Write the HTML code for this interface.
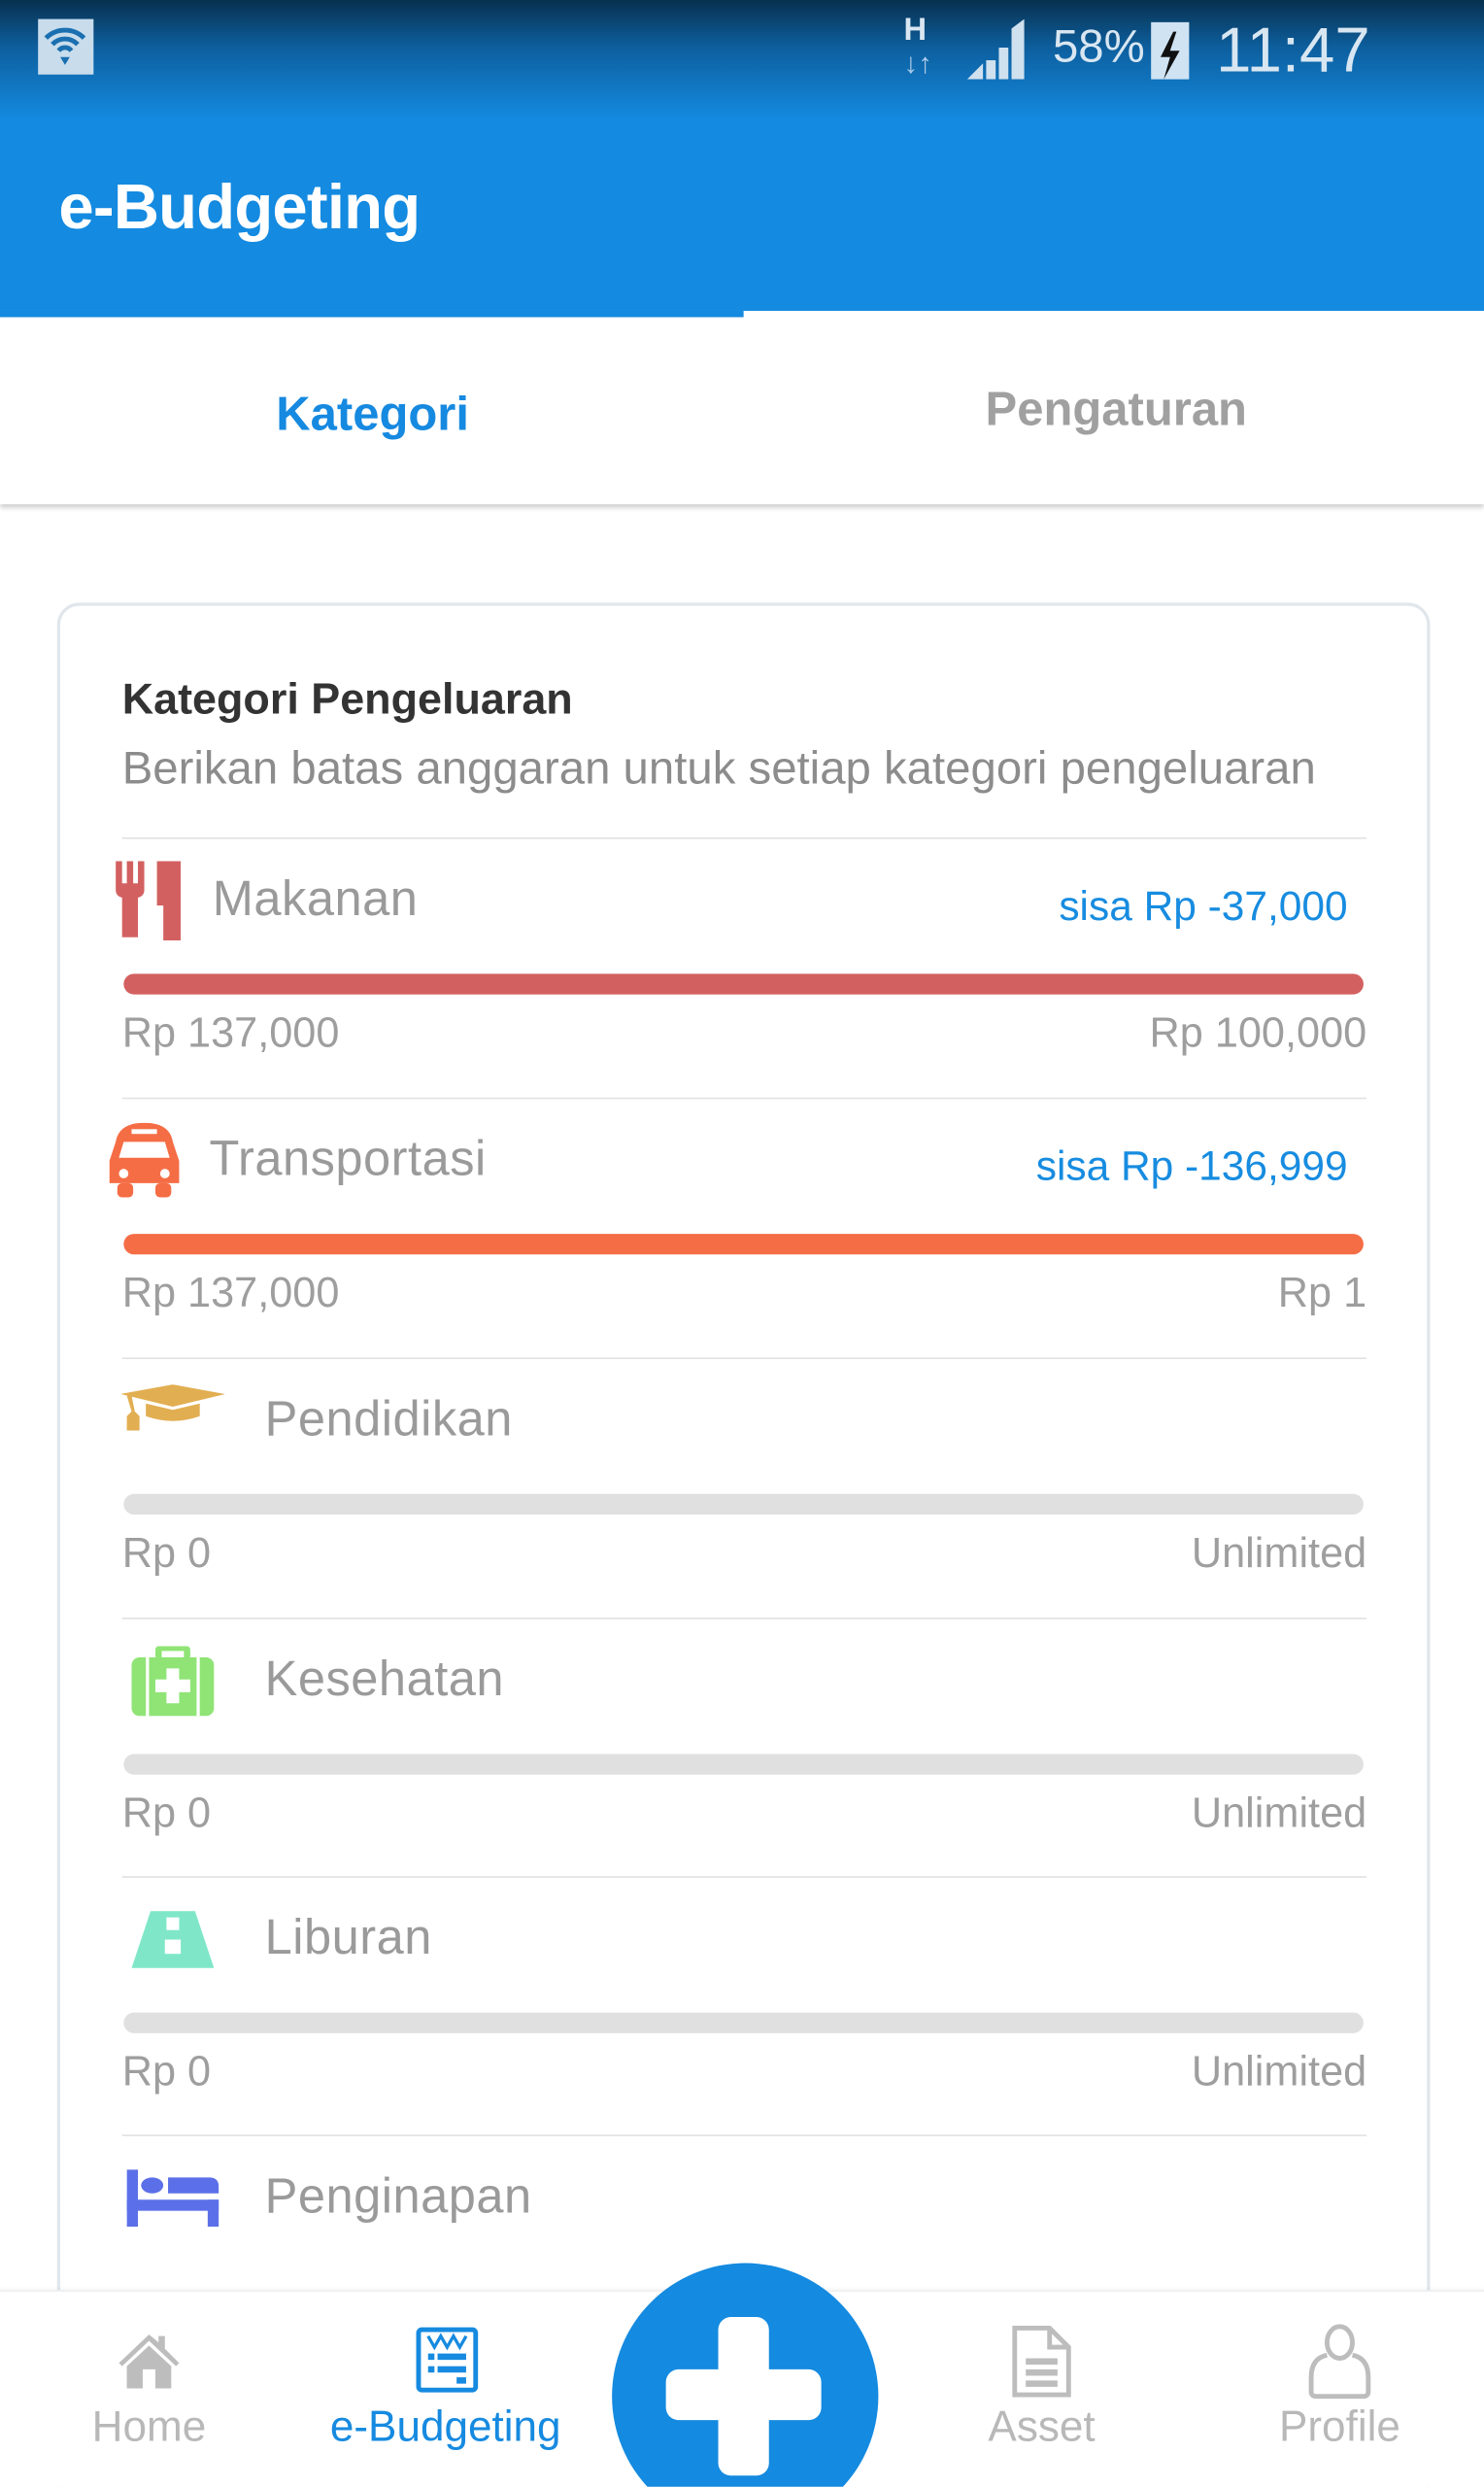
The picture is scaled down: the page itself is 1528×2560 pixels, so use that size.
<!DOCTYPE html>
<html><head><meta charset="utf-8"><style>
*{margin:0;padding:0;box-sizing:border-box}
html,body{width:1528px;height:2560px;overflow:hidden;background:#fff}
#w{position:absolute;left:0;top:0;width:936px;height:1568px;transform:scale(1.63248);transform-origin:0 0;font-family:"Liberation Sans",sans-serif;background:#fff;overflow:hidden}
.a{position:absolute;white-space:nowrap}
.row{position:absolute;left:0;width:936px;height:164px}
.name{position:absolute;font-size:31px;color:#9a9a9a;top:21px;letter-spacing:0.3px}
.sisa{position:absolute;right:86px;top:28px;font-size:26px;color:#178ce0}
.bar{position:absolute;left:78px;width:782px;top:86px;height:13px;border-radius:7px;background:#e0e0e0}
.l{position:absolute;left:77px;top:108px;font-size:26.5px;color:#9e9e9e}
.r{position:absolute;right:74px;top:108px;font-size:26.5px;color:#9e9e9e}
.div{position:absolute;left:77px;width:785px;top:0;height:1px;background:#e2e2e2}
.nl{position:absolute;top:1515px;font-size:27px;color:#b8b8b8;transform:translateX(-50%)}
</style></head><body><div id="w">
<div class="a" style="left:0;top:0;width:936px;height:196px;background:linear-gradient(#08304f 0px,#0d5f9e 30px,#148ae0 75px,#148ae0 196px)"></div>
<div class="a" style="left:0;top:196px;width:469px;height:4px;background:#148ae0"></div>
<div class="a" style="left:24px;top:12px;width:35px;height:35px;background:#c8dcec"></div>
<svg class="a" style="left:26px;top:16px" width="30" height="26" viewBox="0 0 30 26"><path d="M3 8a17 17 0 0 1 24 0M7 12a11 11 0 0 1 16 0M11 16a5 5 0 0 1 8 0" stroke="#1a6fb0" stroke-width="3" fill="none"/><path d="M12 20h6l-3 5z" fill="#1a6fb0"/></svg>
<div class="a" style="left:570px;top:8px;font-size:20px;font-weight:bold;color:#d8e6f2">H</div>
<div class="a" style="left:570px;top:30px;font-size:18px;font-weight:bold;color:#a8c8e8">↓↑</div>
<svg class="a" style="left:610px;top:12px" width="40" height="38"><path d="M0 38L10 28V38ZM12 26h6v12h-6zM20 18h6v20h-6zM28 6l8-6v38h-8z" fill="#cfe0ee"/></svg>
<div class="a" style="left:664px;top:14px;font-size:29px;color:#d8e6f2">58%</div>
<div class="a" style="left:726px;top:14px;width:24px;height:36px;background:#cfe3f3"></div>
<svg class="a" style="left:726px;top:18px" width="24" height="32"><path d="M14 2L6 18h6l-4 14 10-18h-6l4-12z" fill="#111"/></svg>
<div class="a" style="left:767px;top:10px;font-size:40px;color:#d8e6f2">11:47</div>
<div class="a" style="left:37px;top:109px;font-size:40px;font-weight:bold;color:#fff;letter-spacing:-0.5px">e-Budgeting</div>
<div class="a" style="left:0;top:200px;width:936px;height:118px;background:#fff;box-shadow:0 2px 3px rgba(0,0,0,.2)"></div>
<div class="a" style="left:235px;top:245px;transform:translateX(-50%);font-size:30px;font-weight:bold;color:#1689e0">Kategori</div>
<div class="a" style="left:704px;top:242px;transform:translateX(-50%);font-size:30px;font-weight:bold;color:#a0a0a0">Pengaturan</div>
<div class="a" style="left:36px;top:380px;width:866px;height:1200px;border:2px solid #e0e6ec;border-radius:14px;background:#fff"></div>
<div class="a" style="left:77px;top:425px;font-size:27.5px;font-weight:bold;color:#333">Kategori Pengeluaran</div>
<div class="a" style="left:77px;top:469px;font-size:29px;color:#8c8c8c">Berikan batas anggaran untuk setiap kategori pengeluaran</div>

<div class="row" style="top:528px"><div class="div"></div>
<svg class="a" style="left:72px;top:15px" width="42" height="50" viewBox="0 0 42 50"><path d="M1 0h4v14h3V0h4v14h3V0h4v18q0 4-4 5v25h-10V23q-4-1-4-5z" fill="#d36060"/><path d="M27 0h15v50h-11V28h-4z" fill="#d36060"/></svg>
<div class="name" style="left:134px">Makanan</div><div class="sisa">sisa Rp -37,000</div>
<div class="bar" style="background:#d36060"></div><div class="l">Rp 137,000</div><div class="r">Rp 100,000</div></div>

<div class="row" style="top:692px"><div class="div"></div>
<svg class="a" style="left:69px;top:16px" width="44" height="48" viewBox="0 0 44 48"><path d="M4 12Q6 0 22 0T40 12l4 12v14H0V24z" fill="#f56d45"/><rect x="14" y="4" width="16" height="3" fill="#fff"/><path d="M6 22l3-10h26l3 10z" fill="#fff"/><circle cx="9" cy="32" r="3" fill="#fff"/><circle cx="35" cy="32" r="3" fill="#fff"/><rect x="5" y="38" width="10" height="9" rx="3" fill="#f56d45"/><rect x="29" y="38" width="10" height="9" rx="3" fill="#f56d45"/></svg>
<div class="name" style="left:132px">Transportasi</div><div class="sisa">sisa Rp -136,999</div>
<div class="bar" style="background:#f56d45"></div><div class="l">Rp 137,000</div><div class="r">Rp 1</div></div>

<div class="row" style="top:856px"><div class="div"></div>
<svg class="a" style="left:76px;top:17px" width="66" height="44" viewBox="0 0 66 44"><path d="M0 6L33 0l33 6-33 8z" fill="#e2ae52"/><path d="M16 12v8q17 6 34 0v-8l-17 4z" fill="#e2ae52"/><path d="M4 7l3 10-3 3v9h8v-9l-3-3-2-10" fill="#e2ae52"/></svg>
<div class="name" style="left:167px">Pendidikan</div>
<div class="bar"></div><div class="l">Rp 0</div><div class="r">Unlimited</div></div>

<div class="row" style="top:1020px"><div class="div"></div>
<svg class="a" style="left:83px;top:18px" width="52" height="44" viewBox="0 0 52 44"><rect x="15" y="0" width="22" height="8" rx="2" fill="#8fe475"/><rect x="19" y="3" width="14" height="4" fill="#fff"/><rect x="0" y="7" width="52" height="37" rx="5" fill="#8fe475"/><rect x="9" y="7" width="2" height="37" fill="#fff"/><rect x="41" y="7" width="2" height="37" fill="#fff"/><path d="M22 14h8v7h7v8h-7v7h-8v-7h-7v-8h7z" fill="#fff"/></svg>
<div class="name" style="left:167px">Kesehatan</div>
<div class="bar"></div><div class="l">Rp 0</div><div class="r">Unlimited</div></div>

<div class="row" style="top:1183px"><div class="div"></div>
<svg class="a" style="left:83px;top:22px" width="52" height="36" viewBox="0 0 52 36"><path d="M12 0h28l12 36H0z" fill="#7fe7c8"/><rect x="22" y="4" width="8" height="8" fill="#fff"/><rect x="21" y="18" width="10" height="9" fill="#fff"/></svg>
<div class="name" style="left:167px">Liburan</div>
<div class="bar"></div><div class="l">Rp 0</div><div class="r">Unlimited</div></div>

<div class="row" style="top:1346px"><div class="div"></div>
<svg class="a" style="left:80px;top:22px" width="58" height="36" viewBox="0 0 58 36"><rect x="0" y="0" width="7" height="36" fill="#5b70e8"/><ellipse cx="16" cy="10" rx="7" ry="5" fill="#5b70e8"/><path d="M26 5h26q6 0 6 6v4H26z" fill="#5b70e8"/><rect x="0" y="19" width="58" height="7" fill="#5b70e8"/><rect x="51" y="19" width="7" height="17" fill="#5b70e8"/></svg>
<div class="name" style="left:167px">Penginapan</div></div>

<div class="a" style="left:0;top:1444px;width:936px;height:124px;background:#fff;border-top:1px solid #eee;box-shadow:0 -1px 2px rgba(0,0,0,.04)"></div>
<svg class="a" style="left:74px;top:1470px" width="40" height="36" viewBox="0 0 40 36"><path d="M20 2L1 20l2 2L20 6l17 16 2-2L30 11V3h-4v4z" fill="#bdbdbd"/><path d="M6 22L20 9l14 13v14H24V24h-8v12H6z" fill="#bdbdbd"/></svg>
<svg class="a" style="left:262px;top:1467px" width="40" height="42" viewBox="0 0 40 42"><rect x="2" y="2" width="36" height="38" rx="2" fill="none" stroke="#168ae0" stroke-width="3"/><path d="M8 6l4 7 4-7 4 7 4-7 4 7 4-7" fill="none" stroke="#168ae0" stroke-width="2"/><rect x="8" y="17" width="4" height="4" fill="#168ae0"/><rect x="14" y="17" width="18" height="4" fill="#168ae0"/><rect x="8" y="25" width="4" height="4" fill="#168ae0"/><rect x="14" y="25" width="18" height="4" fill="#168ae0"/><rect x="26" y="32" width="6" height="4" fill="#168ae0"/></svg>
<svg class="a" style="left:637px;top:1466px" width="40" height="46" viewBox="0 0 40 46"><path d="M3 2h22l12 12v30H3z" fill="none" stroke="#bdbdbd" stroke-width="3"/><path d="M25 2v12h12" fill="none" stroke="#bdbdbd" stroke-width="3"/><rect x="10" y="21" width="20" height="4" fill="#bdbdbd"/><rect x="10" y="28" width="20" height="4" fill="#bdbdbd"/><rect x="10" y="35" width="20" height="4" fill="#bdbdbd"/></svg>
<svg class="a" style="left:824px;top:1465px" width="42" height="48" viewBox="0 0 42 48"><ellipse cx="21" cy="12" rx="8" ry="10" fill="none" stroke="#bdbdbd" stroke-width="3"/><path d="M13 20q-10 2-10 14v9q0 3 3 3h30q3 0 3-3v-9q0-12-10-14" fill="none" stroke="#bdbdbd" stroke-width="3"/></svg>
<div class="nl" style="left:94px">Home</div>
<div class="nl" style="left:281px;color:#168ae0">e-Budgeting</div>
<div class="nl" style="left:657px">Asset</div>
<div class="nl" style="left:845px">Profile</div>
<div class="a" style="left:386px;top:1427px;width:168px;height:168px;border-radius:50%;background:#148ae0"></div>
<div class="a" style="left:453px;top:1461px;width:32px;height:100px;border-radius:8px;background:#fff"></div>
<div class="a" style="left:420px;top:1494px;width:98px;height:32px;border-radius:8px;background:#fff"></div>
</div></body></html>
